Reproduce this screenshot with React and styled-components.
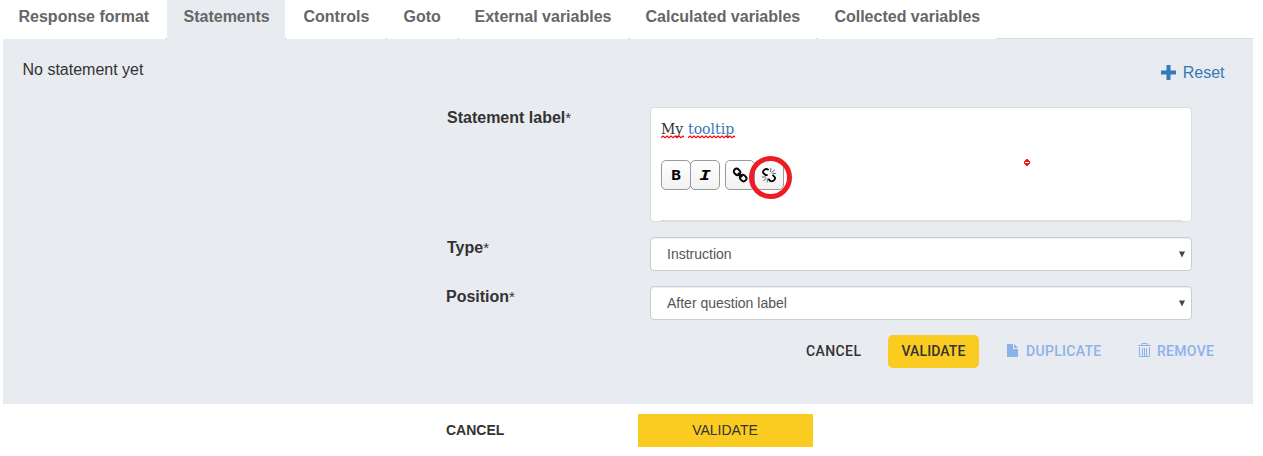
import React from "react";
import styled, { createGlobalStyle } from "styled-components";

const GlobalStyle = createGlobalStyle`
  * { box-sizing: border-box; }
  body { margin: 0; background: #fff; color: #333; font: 16px/20px "Liberation Sans", Arial, sans-serif; overflow: hidden; }
  button { font: inherit; padding: 0; margin: 0; border: 0; background: none; color: inherit; }
`;

const Page = styled.main`
  width: 1250px;
  margin-left: 3px;
`;

const TabBar = styled.nav`
  display: flex;
  gap: 2px;
  height: 39px;
  border-bottom: 1px solid #ddd;
`;

const Tab = styled.button`
  width: ${(p) => p.$width}px;
  height: 39px;
  padding: 0 0 5px ${(p) => p.$indent || 16}px;
  text-align: left;
  white-space: nowrap;
  font-weight: bold;
  color: #666;
  background: ${(p) => (p.$active ? "#e8ebf0" : "#fff")};
`;

const Panel = styled.section`
  height: 365px;
  background: #e8ebf0;
`;

const PanelHeader = styled.header`
  display: flex;
  justify-content: space-between;
  align-items: flex-start;
  height: 68px;
  padding: 21px 28.5px 0 19.5px;
`;

const ResetButton = styled.button`
  display: flex;
  align-items: center;
  gap: 7px;
  margin-top: 3px;
  color: #337ab7;
  svg { margin-top: -2px; }
`;

const Field = styled.div`
  display: grid;
  grid-template-columns: 204px 542px;
  margin: 0 0 15px 443px;
`;

const Label = styled.label`
  font-weight: bold;
  padding-top: 1px;
  padding-left: ${(p) => p.$indent || 0}px;
  sup { font-weight: normal; font-size: 15px; line-height: 0; vertical-align: baseline; }
`;

const Editor = styled.div`
  height: 115px;
  padding: 11px 9px 0 10px;
  background: #fff;
  border: 1px solid #ddd;
  border-radius: 4px;
`;

const EditorText = styled.div`
  height: 41px;
  font-family: "DejaVu Serif Condensed", "DejaVu Serif", serif;
  font-stretch: condensed;
  font-size: 15.6px;
  line-height: 20px;
  white-space: pre;
`;

const Word = styled.span`
  position: relative;
  display: inline-block;
  width: ${(p) => p.$width}px;
  margin-right: 4px;
  color: ${(p) => (p.$link ? "#337ab7" : "#333")};
  svg { position: absolute; left: 0; top: 16px; }
`;

const Toolbar = styled.div`
  display: flex;
  gap: 5px;
  height: 61px;
  border-bottom: 1px solid #ddd;
`;

const ToolGroup = styled.div`
  display: flex;
`;

const ToolButton = styled.button`
  position: relative;
  width: 30px;
  height: 30px;
  display: flex;
  align-items: center;
  justify-content: center;
  border: 1px solid #999;
  border-radius: 5px;
  background: linear-gradient(#fff, #f2f2f2);
  color: #000;
  & + & { margin-left: -1px; }
`;

const Letter = styled.span`
  font: ${(p) => (p.$italic ? "italic bold 14px 'DejaVu Sans Mono'" : "bold 14px 'DejaVu Sans Mono'")}, monospace;
  line-height: 28px;
  transform: scaleX(${(p) => (p.$italic ? 1.35 : 1.15)});
`;

const Ring = styled.span`
  position: absolute;
  left: -6px;
  top: -5px;
  width: 43px;
  height: 43px;
  border: 5px solid #ed1c24;
  border-radius: 50%;
`;

const Mark = styled.svg`
  position: absolute;
  left: 1024px;
  top: 159px;
`;

const Select = styled.div`
  display: flex;
  align-items: center;
  justify-content: space-between;
  height: 34px;
  padding: 0 5px 0 16px;
  background: #fff;
  border: 1px solid #ccc;
  border-radius: 4px;
  box-shadow: inset 0 1px 1px rgba(0, 0, 0, 0.075);
  font-size: 14px;
  color: #555;
`;

const Actions = styled.div`
  display: flex;
  align-items: center;
  height: 33px;
  padding-left: 803px;
  font-family: Roboto, "Liberation Sans", sans-serif;
  font-size: 14px;
  font-weight: 500;
`;

const Action = styled.button`
  display: flex;
  align-items: center;
  height: 33px;
  width: ${(p) => p.$width}px;
  gap: ${(p) => p.$gap || 0}px;
  padding-bottom: 2px;
  margin-right: ${(p) => p.$after || 0}px;
  color: ${(p) => (p.$muted ? "#8cb2ec" : "#333")};
  letter-spacing: ${(p) => p.$spacing || 0}px;
`;

const Primary = styled(Action)`
  justify-content: center;
  background: #facb21;
  border-radius: 5px;
`;

const Footer = styled.footer`
  display: flex;
  align-items: center;
  height: 33px;
  margin: 10px 0 0 443px;
  font-size: 14px;
`;

const FooterCancel = styled.button`
  width: 192px;
  padding-bottom: 2px;
  text-align: left;
  font-weight: bold;
`;

const FooterValidate = styled.button`
  width: 175px;
  height: 33px;
  padding: 0 1px 2px 0;
  background: #facb21;
`;

const Squiggle = ({ width }) => (
  <svg width={width} height="4">
    <path
      d={"M0 2.7" + Array.from({ length: Math.ceil(width / 2) }, (_, i) => ` L${i * 2 + 2} ${i % 2 ? 2.7 : 1.1}`).join("")}
      fill="none"
      stroke="#f00"
      strokeWidth="1.2"
    />
  </svg>
);

const LinkIcon = () => (
  <svg width="16" height="16" viewBox="0 0 16 16" fill="none" stroke="#000" strokeWidth="1.9">
    <g transform="rotate(45 8 8)">
      <rect x="0.3" y="5.1" width="6.8" height="5.6" rx="2.8" />
      <rect x="9" y="5.1" width="6.8" height="5.6" rx="2.8" />
      <path d="M5 8h6" />
    </g>
  </svg>
);

const UnlinkIcon = () => (
  <svg width="16" height="16" viewBox="0 0 16 16" fill="none" stroke="#000">
    <path d="M7.6 3.2 6.5 2.2C4.8 1 1.3 3.8 2.2 5.9L4.8 8.2 6.6 7.8M7.2 11.8l2.2 2.2C11.4 15.2 15 12.4 13.8 10.2L11.6 7.8" strokeWidth="1.8" />
    <path d="M9.6 5 9.9 1M10.6 5.5 14 2.6M11.2 6.4h4M4.8 10H.8M5.4 11 2.2 14M6.4 11.6 6.1 15.4" strokeWidth=".6" />
  </svg>
);

const Arrow = () => (
  <svg width="8" height="7">
    <path d="M1 .5h6L4 6.5z" fill="#444" />
  </svg>
);

const TABS = [
  ["Response format", 162],
  ["Statements", 118, 16.5],
  ["Controls", 98, 16.5],
  ["Goto", 70, 16.5],
  ["External variables", 169],
  ["Calculated variables", 186],
  ["Collected variables", 178, 16.4],
];

export default function App() {
  return (
    <Page>
      <GlobalStyle />
      <TabBar>
        {TABS.map(([name, width, indent]) => (
          <Tab key={name} $width={width} $indent={indent || 15.5} $active={name === "Statements"}>{name}</Tab>
        ))}
      </TabBar>
      <Panel>
        <PanelHeader>
          <span>No statement yet</span>
          <ResetButton>
            <svg width="15" height="15"><path d="M5.5 0h4v5.5H15v4H9.5V15h-4V9.5H0v-4h5.5z" fill="#337ab7" /></svg>
            Reset
          </ResetButton>
        </PanelHeader>
        <Field>
          <Label $indent={1}>Statement label<sup>*</sup></Label>
          <Editor>
            <EditorText>
              <Word $width={23}>My<Squiggle width={23} /></Word>
              <Word $width={47} $link>tooltip<Squiggle width={47} /></Word>
            </EditorText>
            <Toolbar>
              <ToolGroup>
                <ToolButton><Letter>B</Letter></ToolButton>
                <ToolButton><Letter $italic>I</Letter></ToolButton>
              </ToolGroup>
              <ToolGroup>
                <ToolButton><LinkIcon /></ToolButton>
                <ToolButton><UnlinkIcon /><Ring /></ToolButton>
              </ToolGroup>
            </Toolbar>
          </Editor>
        </Field>
        <Field>
          <Label $indent={1}>Type<sup>*</sup></Label>
          <Select>Instruction<Arrow /></Select>
        </Field>
        <Field>
          <Label>Position<sup>*</sup></Label>
          <Select>After question label<Arrow /></Select>
        </Field>
        <Actions>
          <Action $width={82} $spacing={0.4}>CANCEL</Action>
          <Primary $width={91} $after={28} $spacing={0.1}>VALIDATE</Primary>
          <Action $width={102} $gap={8} $after={29} $muted $spacing={0.3}>
            <svg width="11" height="13"><path d="M0 0h6v5h5v8H0zM7 0l4 4H7z" fill="#8cb2ec" /></svg>
            DUPLICATE
          </Action>
          <Action $width={80} $gap={6} $muted $spacing={0.3}>
            <svg width="13" height="15" fill="none" stroke="#8cb2ec"><path d="M0 2.5h13M4 2V.5h5V2M1.5 4v9.5h10V4M4.5 5v8M6.5 5v8M8.5 5v8" /></svg>
            REMOVE
          </Action>
        </Actions>
      </Panel>
      <Footer>
        <FooterCancel>CANCEL</FooterCancel>
        <FooterValidate>VALIDATE</FooterValidate>
      </Footer>
      <Mark width="6" height="7"><path d="M2 0h2v1h1v1h1v3H5v1H4v1H2V6H1V5H0V2h1V1h1z" fill="#ed1c24" /><path d="M1 3h4v1H1z" fill="#fff" /></Mark>
    </Page>
  );
}
